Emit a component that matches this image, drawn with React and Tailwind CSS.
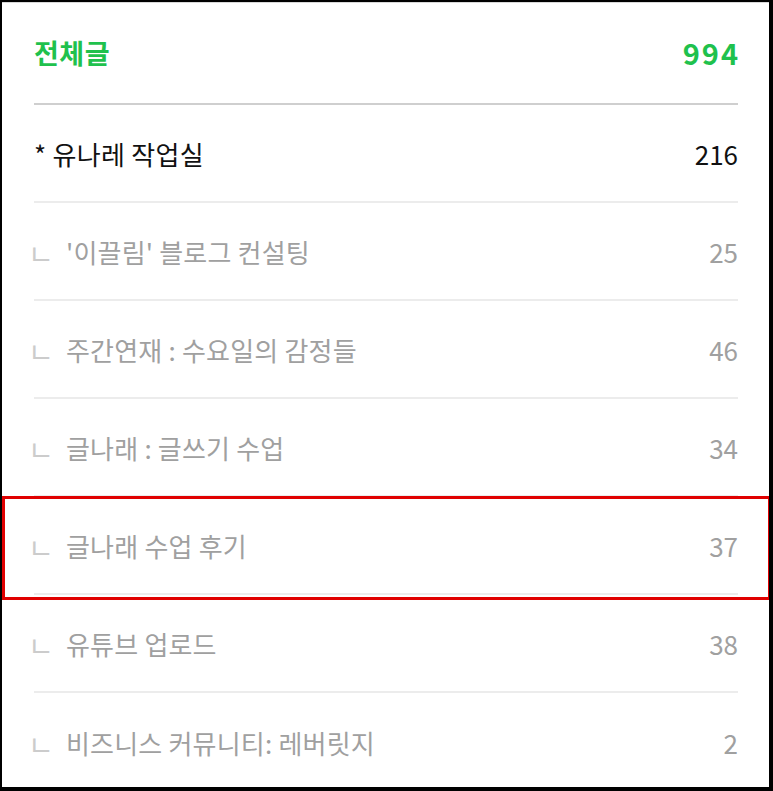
import React from 'react';

const subs = [
  { name: "'이끌림' 블로그 컨설팅", count: 25 },
  { name: '주간연재 : 수요일의 감정들', count: 46 },
  { name: '글나래 : 글쓰기 수업', count: 34 },
  { name: '글나래 수업 후기', count: 37 },
  { name: '유튜브 업로드', count: 38 },
  { name: '비즈니스 커뮤니티: 레버릿지', count: 2 },
];

const font = { fontFamily: '"Noto Sans CJK KR", "Noto Sans", sans-serif' };

function App() {
  return (
    <div
      className="relative w-[773px] h-[791px] overflow-hidden bg-white border-t-2 border-l-2 border-r-4 border-b-4 border-black"
      style={font}
    >
      <div className="flex flex-col pl-[32px] pr-[31px] border-t border-[#d8d8d8]">
        {/* 전체글 */}
        <div className="h-[102px] flex items-center justify-between border-b-2 border-[#cfcfcf]">
          <span className="text-[27px] font-bold text-[#1fc14d] tracking-[0.5px]">전체글</span>
          <span className="text-[29px] font-bold text-[#1fc14d] tracking-[2px] -mr-[2px]">994</span>
        </div>

        <div className="h-[98px] flex items-center justify-between border-b-2 border-[#ececec]">
          <span className="text-[26px] text-[#111] tracking-[0.3px]">* 유나레 작업실</span>
          <span className="text-[26px] text-[#111]">216</span>
        </div>

        {subs.map((s, i) => (
          <div
            key={s.name}
            className={
              'h-[98px] shrink-0 flex items-center justify-between ' +
              (i < subs.length - 1 ? 'border-b-2 border-[#ececec]' : '')
            }
          >
            <div className="flex items-center">
              <span className="w-[32px] text-[28px] text-[#cccccc] leading-none -ml-[6px] mr-[6px] pt-[4px]">ㄴ</span>
              <span className="text-[26px] text-[#a0a0a0] tracking-[0.2px]">{s.name}</span>
            </div>
            <span className="text-[26px] text-[#a0a0a0]">{s.count}</span>
          </div>
        ))}
      </div>

      {/* highlight box */}
      <div className="absolute left-0 top-[494px] w-[769px] h-[104px] border-[3px] border-[#e00000] z-10" />
    </div>
  );
}

export default App;
